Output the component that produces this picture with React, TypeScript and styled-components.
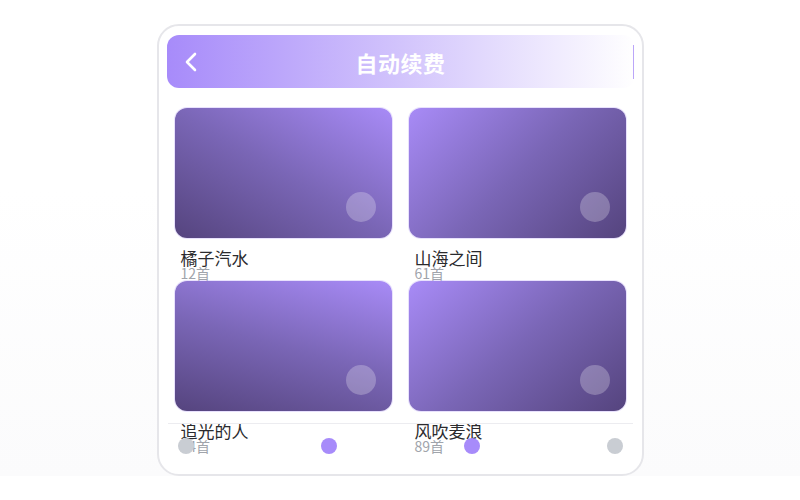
import React from "react";
import styled, { createGlobalStyle } from "styled-components";

const Global = createGlobalStyle`
  html, body { margin: 0; padding: 0; background: #ffffff; }
  body { font-family: "Noto Sans CJK SC", "Noto Sans", sans-serif; }
`;

const Page = styled.div`
  min-height: 468px;
  box-sizing: border-box;
  padding-top: 24px;
  display: flex;
  justify-content: center;
  align-items: flex-start;
  background: linear-gradient(180deg, #ffffff 40%, #fbfbfc 100%);
`;

const Phone = styled.div`
  position: relative;
  width: 487px;
  height: 452px;
  box-sizing: border-box;
  border: 2px solid #e6e6ea;
  border-radius: 22px;
  background: #ffffff;
  padding: 9px 7px 0 8px;
  overflow: hidden;
`;

const Header = styled.div`
  height: 53px;
  border-radius: 12px;
  background: linear-gradient(90deg, #a78bfa 0%, #d2c4fc 50%, #ffffff 100%);
  display: grid;
  grid-template-columns: 60px 1fr 60px;
  align-items: center;
`;

const BackButton = styled.div`
  display: flex;
  align-items: center;
  padding-left: 18px;
`;

const Title = styled.div`
  text-align: center;
  color: #ffffff;
  font-size: 22px;
  font-weight: 700;
  letter-spacing: 0.5px;
`;

const RightSlot = styled.div`
  justify-self: end;
  align-self: stretch;
  margin: 10px 1px 9px 0;
  width: 1px;
  background: #bba6f9;
`;

const Grid = styled.div`
  margin-top: 20px;
  padding: 0 7px 0 8px;
  display: grid;
  grid-template-columns: 217px 217px;
  column-gap: 17px;
`;

const Item = styled.div`
  display: flex;
  flex-direction: column;
`;

const Cover = styled.div<{ $angle: number }>`
  position: relative;
  height: 130px;
  border-radius: 12px;
  background: linear-gradient(${(p) => p.$angle}deg, #55447e 0%, #7a66b6 50%, #a88bf7 100%);
  box-shadow: 0 0 0 1px rgba(190, 170, 250, 0.35);
`;

const PlayDot = styled.div`
  position: absolute;
  right: 16px;
  bottom: 16px;
  width: 30px;
  height: 30px;
  border-radius: 50%;
  background: rgba(255, 255, 255, 0.25);
`;

const Name = styled.div`
  margin-top: 12px;
  padding-left: 6px;
  font-size: 17px;
  line-height: 16px;
  height: 16px;
  color: #2b2b2e;
  white-space: nowrap;
`;

const Count = styled.div`
  padding-left: 6px;
  font-size: 14px;
  line-height: 15px;
  height: 15px;
  color: #a0a4ab;
  white-space: nowrap;
`;

const TabBar = styled.div`
  position: absolute;
  left: 9px;
  right: 9px;
  bottom: 6px;
  height: 44px;
  border-top: 1px solid #ececf0;
  display: flex;
  justify-content: space-between;
  align-items: center;
  padding: 0 10px;
`;

const TabDot = styled.div<{ $active?: boolean }>`
  width: 16px;
  height: 16px;
  border-radius: 50%;
  background: ${(p) => (p.$active ? "#a78bfa" : "#c9cdd3")};
`;

const items = [
  { name: "橘子汽水", count: "12首", angle: 30 },
  { name: "山海之间", count: "61首", angle: 315 },
  { name: "追光的人", count: "24首", angle: 15 },
  { name: "风吹麦浪", count: "89首", angle: 320 },
];

export default function App() {
  return (
    <>
      <Global />
      <Page>
        <Phone>
          <Header>
            <BackButton>
              <svg width="12" height="20" viewBox="0 0 12 20" fill="none">
                <path d="M10 2 L2 10 L10 18" stroke="#ffffff" strokeWidth="2.6" strokeLinecap="round" strokeLinejoin="round" />
              </svg>
            </BackButton>
            <Title>自动续费</Title>
            <RightSlot />
          </Header>
          <Grid>
            {items.map((it) => (
              <Item key={it.name}>
                <Cover $angle={it.angle}>
                  <PlayDot />
                </Cover>
                <Name>{it.name}</Name>
                <Count>{it.count}</Count>
              </Item>
            ))}
          </Grid>
          <TabBar>
            <TabDot />
            <TabDot $active />
            <TabDot $active />
            <TabDot />
          </TabBar>
        </Phone>
      </Page>
    </>
  );
}
